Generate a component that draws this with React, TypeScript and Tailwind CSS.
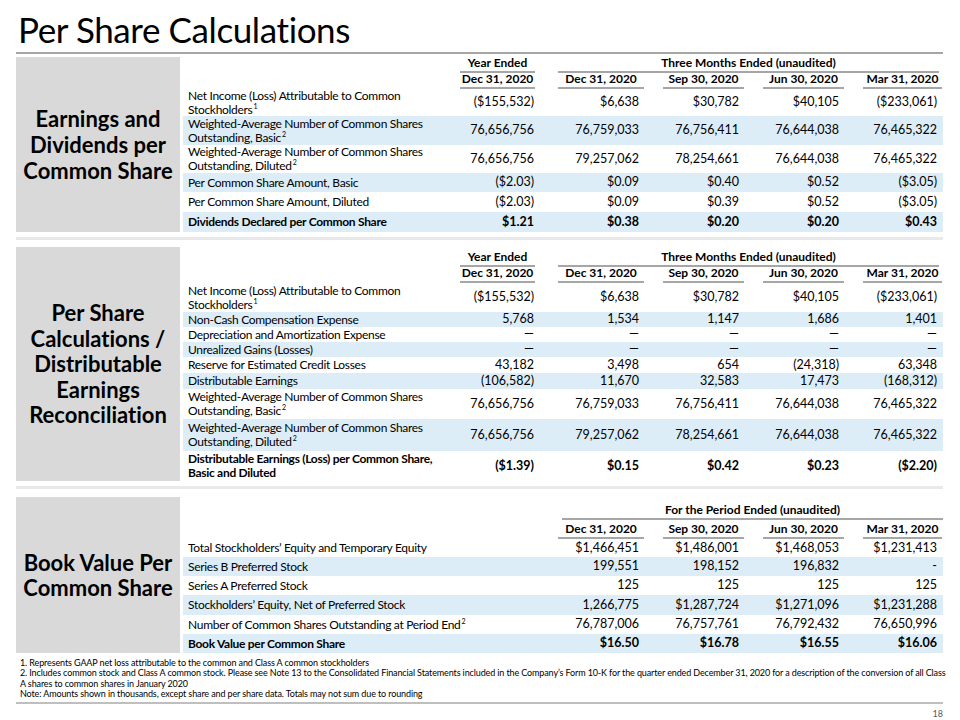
import React from 'react';

type Row = {
  label: React.ReactNode;
  vals: string[];
  blue?: boolean;
  bold?: boolean;
  h: string;
};

const COLS = ['w-[85px]', 'w-[105px]', 'w-[100px]', 'w-[100px]', 'w-[98px]'];
const DATE_COLS = ['Dec 31, 2020', 'Sep 30, 2020', 'Jun 30, 2020', 'Mar 31, 2020'];

const Sup = ({ n }: { n: string }) => (
  <sup className="text-[7px] relative -top-[5px] ml-[1px]">{n}</sup>
);

const earnings: Row[] = [
  { label: <>Net Income (Loss) Attributable to Common<br />Stockholders<Sup n="1" /></>, vals: ['($155,532)', '$6,638', '$30,782', '$40,105', '($233,061)'], h: 'h-[27px]' },
  { label: <>Weighted-Average Number of Common Shares<br />Outstanding, Basic<Sup n="2" /></>, vals: ['76,656,756', '76,759,033', '76,756,411', '76,644,038', '76,465,322'], blue: true, h: 'h-[29px]' },
  { label: <>Weighted-Average Number of Common Shares<br />Outstanding, Diluted<Sup n="2" /></>, vals: ['76,656,756', '79,257,062', '78,254,661', '76,644,038', '76,465,322'], h: 'h-[28px]' },
  { label: 'Per Common Share Amount, Basic', vals: ['($2.03)', '$0.09', '$0.40', '$0.52', '($3.05)'], blue: true, h: 'h-[19px]' },
  { label: 'Per Common Share Amount, Diluted', vals: ['($2.03)', '$0.09', '$0.39', '$0.52', '($3.05)'], h: 'h-[20px]' },
  { label: 'Dividends Declared per Common Share', vals: ['$1.21', '$0.38', '$0.20', '$0.20', '$0.43'], blue: true, bold: true, h: 'h-[20px]' },
];

const distributable: Row[] = [
  { label: <>Net Income (Loss) Attributable to Common<br />Stockholders<Sup n="1" /></>, vals: ['($155,532)', '$6,638', '$30,782', '$40,105', '($233,061)'], h: 'h-[29px]' },
  { label: 'Non-Cash Compensation Expense', vals: ['5,768', '1,534', '1,147', '1,686', '1,401'], blue: true, h: 'h-[15px]' },
  { label: 'Depreciation and Amortization Expense', vals: ['—', '—', '—', '—', '—'], h: 'h-[15px]' },
  { label: 'Unrealized Gains (Losses)', vals: ['—', '—', '—', '—', '—'], blue: true, h: 'h-[15px]' },
  { label: 'Reserve for Estimated Credit Losses', vals: ['43,182', '3,498', '654', '(24,318)', '63,348'], h: 'h-[16px]' },
  { label: 'Distributable Earnings', vals: ['(106,582)', '11,670', '32,583', '17,473', '(168,312)'], blue: true, h: 'h-[16px]' },
  { label: <>Weighted-Average Number of Common Shares<br />Outstanding, Basic<Sup n="2" /></>, vals: ['76,656,756', '76,759,033', '76,756,411', '76,644,038', '76,465,322'], h: 'h-[30px]' },
  { label: <>Weighted-Average Number of Common Shares<br />Outstanding, Diluted<Sup n="2" /></>, vals: ['76,656,756', '79,257,062', '78,254,661', '76,644,038', '76,465,322'], blue: true, h: 'h-[32px]' },
  { label: <>Distributable Earnings (Loss) per Common Share,<br />Basic and Diluted</>, vals: ['($1.39)', '$0.15', '$0.42', '$0.23', '($2.20)'], bold: true, h: 'h-[30px]' },
];

const bookValue: Row[] = [
  { label: 'Total Stockholders’ Equity and Temporary Equity', vals: ['$1,466,451', '$1,486,001', '$1,468,053', '$1,231,413'], h: 'h-[18px]' },
  { label: 'Series B Preferred Stock', vals: ['199,551', '198,152', '196,832', '-'], blue: true, h: 'h-[19px]' },
  { label: 'Series A Preferred Stock', vals: ['125', '125', '125', '125'], h: 'h-[19px]' },
  { label: 'Stockholders’ Equity, Net of Preferred Stock', vals: ['1,266,775', '$1,287,724', '$1,271,096', '$1,231,288'], blue: true, h: 'h-[20px]' },
  { label: <>Number of Common Shares Outstanding at Period End<Sup n="2" /></>, vals: ['76,787,006', '76,757,761', '76,792,432', '76,650,996'], h: 'h-[19px]' },
  { label: 'Book Value per Common Share', vals: ['$16.50', '$16.78', '$16.55', '$16.06'], blue: true, bold: true, h: 'h-[19px]' },
];

function DataRow({ row, wide = false }: { row: Row; wide?: boolean }) {
  const cols = wide ? COLS.slice(1) : COLS;
  return (
    <div className={`flex items-center ${row.h} ${row.blue ? 'bg-[#ddedf8]' : ''} ${row.bold ? 'font-bold' : ''}`}>
      <div className={`${wide ? 'w-[357px]' : 'w-[272px]'} pl-[5px] text-[12px] tracking-[-0.3px] leading-[14px] whitespace-nowrap`}>
        {row.label}
      </div>
      {row.vals.map((v, i) => (
        <div key={i} className={`${cols[i]} text-right pr-[6px] text-[12.5px] whitespace-nowrap`}>{v}</div>
      ))}
    </div>
  );
}

const Underlined = ({ children, className = '' }: { children: React.ReactNode; className?: string }) => (
  <div className={`border-b-2 border-[#a6a6a6] text-center text-[12px] leading-[12px] pb-[2px] whitespace-nowrap ${className}`}>
    {children}
  </div>
);

function QuarterHeader({ top }: { top: string }) {
  return (
    <div className={`font-bold ${top}`}>
      <div className="flex items-end">
        <div className="w-[272px]" />
        <div className="w-[85px]"><Underlined className="mx-[5px]">Year Ended</Underlined></div>
        <div className="w-[403px]"><Underlined className="ml-[18px] mr-[4px]">Three Months Ended (unaudited)</Underlined></div>
      </div>
      <div className="flex items-end">
        <div className="w-[272px]" />
        <div className="w-[85px]"><Underlined className="mx-[5px]">Dec 31, 2020</Underlined></div>
        {DATE_COLS.map((d, i) => (
          <div key={d} className={COLS[i + 1]}><Underlined className="ml-[18px] mr-[1px]">{d}</Underlined></div>
        ))}
      </div>
    </div>
  );
}

function Section({ title, lead, children }: { title: React.ReactNode; lead: string; children: React.ReactNode }) {
  return (
    <div className="flex gap-[3px]">
      <div className={`w-[164px] shrink-0 bg-[#d9d9d9] flex items-center justify-center text-center font-bold text-[22px] ${lead}`}>
        {title}
      </div>
      <div className="w-[760px]">{children}</div>
    </div>
  );
}

const Separator = () => <div className="h-[3px] bg-[#e9e9e9] w-[927px]" />;

export default function App() {
  return (
    <div className="w-[960px] h-[720px] bg-white text-black font-['Lato',sans-serif] overflow-hidden [font-variant-ligatures:none]">
      <h1 className="pl-[18px] pt-[8px] h-[52px] text-[35px] tracking-[-0.4px] leading-[42px]">Per Share Calculations</h1>
      <div className="ml-[16px] w-[927px] h-[2px] bg-[#a6a6a6]" />
      <div className="ml-[16px] w-[927px]">
        <div className="mt-[3px]">
          <Section lead="leading-[26px]" title={<>Earnings and<br />Dividends per<br />Common Share</>}>
            <QuarterHeader top="pt-[0px]" />
            {earnings.map((r, i) => <DataRow key={i} row={r} />)}
          </Section>
        </div>
        <div className="mt-[5px] mb-[7px]"><Separator /></div>
        <Section lead="leading-[25.5px]" title={<>Per Share<br />Calculations /<br />Distributable<br />Earnings<br />Reconciliation</>}>
          <QuarterHeader top="pt-[4px]" />
          {distributable.map((r, i) => <DataRow key={i} row={r} />)}
        </Section>
        <div className="mt-[5px] mb-[8px]"><Separator /></div>
        <Section lead="leading-[25px]" title={<>Book Value Per<br />Common Share</>}>
          <div className="font-bold pt-[7px]">
            <div className="flex items-end">
              <div className="w-[357px]" />
              <div className="w-[403px]"><Underlined className="ml-[22px] mr-[0px]">For the Period Ended (unaudited)</Underlined></div>
            </div>
            <div className="flex items-end mt-[3px]">
              <div className="w-[357px]" />
              {DATE_COLS.map((d, i) => (
                <div key={d} className={COLS[i + 1]}><Underlined className="ml-[18px] mr-[1px]">{d}</Underlined></div>
              ))}
            </div>
          </div>
          {bookValue.map((r, i) => <DataRow key={i} row={r} wide />)}
        </Section>
        <div className="pt-[5px] pl-[4px] text-[9px] tracking-[-0.12px] leading-[10.3px] pb-[3px] whitespace-nowrap">
          <p>1. Represents GAAP net loss attributable to the common and Class A common stockholders</p>
          <p>2. Includes common stock and Class A common stock. Please see Note 13 to the Consolidated Financial Statements included in the Company’s Form 10-K for the quarter ended December 31, 2020 for a description of the conversion of all Class</p>
          <p>A shares to common shares in January 2020</p>
          <p>Note: Amounts shown in thousands, except share and per share data. Totals may not sum due to rounding</p>
        </div>
        <div className="h-[2px] bg-[#bfbfbf]" />
        <div className="text-right text-[9px] leading-[10px] text-[#595959] pr-[0px] pt-[5px]">18</div>
      </div>
    </div>
  );
}
